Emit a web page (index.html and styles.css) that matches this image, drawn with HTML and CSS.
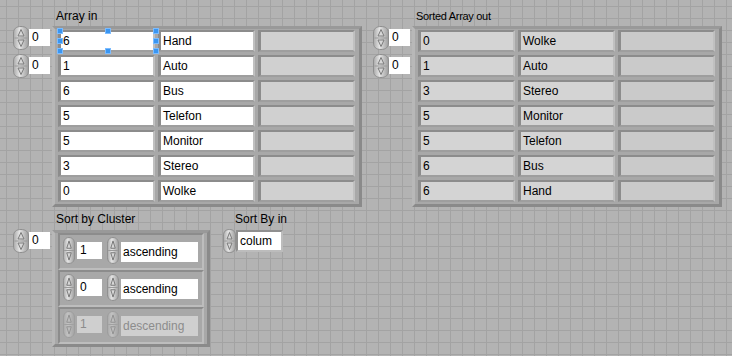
FILE: index.html
```html
<!DOCTYPE html>
<html lang="de">
<head>
    <meta charset="UTF-8">
    <meta name="viewport" content="width=device-width, initial-scale=1.0">
    <title>Sort Array</title>
    <link rel="stylesheet" href="styles.css">
</head>
<body>
    <svg class="defs">
        <defs>
            <linearGradient id="spinFill" x1="0" y1="0" x2="1" y2="0">
                <stop offset="0" stop-color="#a9a9a9"/>
                <stop offset="0.4" stop-color="#e4e4e4"/>
                <stop offset="1" stop-color="#9d9d9d"/>
            </linearGradient>
        </defs>
    </svg>

    <div class="panel">
        <div class="row top">
            <div class="array-ctl">
                <div class="label">Array in</div>
                <div class="array-body">
                    <div class="index-col">
                        <div class="index"><span class="spin"></span><div class="num">0</div></div>
                        <div class="index"><span class="spin"></span><div class="num">0</div></div>
                    </div>
                    <div class="frame array-frame"><div class="cells" id="arrayIn"></div></div>
                </div>
            </div>

            <div class="array-ctl out">
                <div class="label small">Sorted Array out</div>
                <div class="array-body">
                    <div class="index-col">
                        <div class="index"><span class="spin"></span><div class="num">0</div></div>
                        <div class="index"><span class="spin"></span><div class="num">0</div></div>
                    </div>
                    <div class="frame array-frame"><div class="cells" id="arrayOut"></div></div>
                </div>
            </div>
        </div>

        <div class="row bottom">
            <div class="array-ctl">
                <div class="label">Sort by Cluster</div>
                <div class="array-body">
                    <div class="index-col">
                        <div class="index"><span class="spin"></span><div class="num">0</div></div>
                    </div>
                    <div class="frame cluster-frame" id="sortCluster"></div>
                </div>
            </div>

            <div class="sortby">
                <div class="label">Sort By in</div>
                <div class="sortby-body">
                    <span class="spin"></span>
                    <div class="ring-frame"><div class="ring">colum</div></div>
                </div>
            </div>
        </div>
    </div>

    <script>
        const arrayIn = [[6, 'Hand'], [1, 'Auto'], [6, 'Bus'], [5, 'Telefon'], [5, 'Monitor'], [3, 'Stereo'], [0, 'Wolke']];
        const arrayOut = [[0, 'Wolke'], [1, 'Auto'], [3, 'Stereo'], [5, 'Monitor'], [5, 'Telefon'], [6, 'Bus'], [6, 'Hand']];
        const sortCluster = [[1, 'ascending', false], [0, 'ascending', false], [1, 'descending', true]];

        const spinSvg =
            '<svg viewBox="0 0 16 24" preserveAspectRatio="none">' +
            '<path d="M8 0.5C13 0.5 15.5 3 15.5 7V17C15.5 21 13 23.5 8 23.5C3 23.5 0.5 21 0.5 17V7C0.5 3 3 0.5 8 0.5Z" fill="url(#spinFill)" stroke="#8e8e8e" vector-effect="non-scaling-stroke"/>' +
            '<line x1="1.5" y1="12" x2="14.5" y2="12" stroke="#9a9a9a" vector-effect="non-scaling-stroke"/>' +
            '<path d="M8 3.5L11 10H5Z" fill="#d8d8d8" stroke="#7a7a7a" vector-effect="non-scaling-stroke"/>' +
            '<path d="M8 20.5L11 14H5Z" fill="#d8d8d8" stroke="#7a7a7a" vector-effect="non-scaling-stroke"/>' +
            '</svg>';

        function fillArray(id, rows) {
            const grid = document.getElementById(id);
            rows.forEach(([num, word]) => {
                [num, word, ''].forEach((value, col) => {
                    const cell = document.createElement('div');
                    cell.className = col === 2 ? 'cell empty' : 'cell';
                    cell.textContent = value;
                    grid.appendChild(cell);
                });
            });
        }

        fillArray('arrayIn', arrayIn);
        fillArray('arrayOut', arrayOut);

        // selection handles round the first element
        const selected = document.querySelector('#arrayIn .cell');
        selected.classList.add('selected');
        ['tl', 'tm', 'tr', 'ml', 'mr', 'bl', 'bm', 'br'].forEach(pos => {
            const handle = document.createElement('span');
            handle.className = 'handle h-' + pos;
            selected.appendChild(handle);
        });

        const clusterFrame = document.getElementById('sortCluster');
        sortCluster.forEach(([num, order, disabled]) => {
            const cluster = document.createElement('div');
            cluster.className = disabled ? 'cluster disabled' : 'cluster';
            cluster.innerHTML =
                '<span class="spin"></span><div class="num">' + num + '</div>' +
                '<span class="spin"></span><div class="ring">' + order + '</div>';
            clusterFrame.appendChild(cluster);
        });

        document.querySelectorAll('.spin').forEach(spin => {
            spin.innerHTML = spinSvg;
        });
    </script>
</body>
</html>
```

FILE: styles.css
```css
body {
    margin: 0;
    width: 732px;
    height: 356px;
    overflow: hidden;
    background-color: #b3b3b3;
    background-image:
        linear-gradient(to right, #a3a3a3 1px, transparent 1px),
        linear-gradient(to bottom, #a3a3a3 1px, transparent 1px);
    background-size: 12px 12px;
    background-position: 6px 6px;
    font-family: "Liberation Sans", Arial, sans-serif;
    font-size: 12px;
    color: #000;
}
.defs {
    position: absolute;
    width: 0;
    height: 0;
}
.panel {
    padding: 9px 0 0 13px;
}
.row {
    display: flex;
    align-items: flex-start;
}
.row.top {
    gap: 11px;
}
.row.bottom {
    margin-top: 5px;
    gap: 13px;
}
.label {
    height: 17px;
    line-height: 15px;
    padding-left: 43px;
    white-space: nowrap;
}
.label.small {
    font-size: 11px;
    letter-spacing: -0.3px;
}
.array-body {
    display: flex;
    align-items: flex-start;
    gap: 2px;
}
.index-col {
    display: flex;
    flex-direction: column;
    gap: 4px;
}
.index {
    display: flex;
    align-items: flex-start;
}
.spin {
    display: block;
    width: 16px;
    height: 24px;
    flex: none;
}
.spin svg {
    display: block;
    width: 100%;
    height: 100%;
}
.num {
    box-sizing: border-box;
    width: 21px;
    height: 17px;
    margin-top: 3px;
    padding-left: 3px;
    line-height: 17px;
    background: #fff;
}
.frame {
    border: 3px solid;
    border-color: #999 #8a8a8a #8a8a8a #b8b8b8;
    background: #a8a8a8;
}
.array-frame {
    padding: 1px 4px 2px 3px;
}
.cells {
    display: grid;
    grid-template-columns: repeat(3, 97px);
    gap: 3px;
}
.cell {
    box-sizing: border-box;
    height: 22px;
    padding-left: 2px;
    border-style: solid;
    border-width: 2px 2px 2px 3px;
    border-color: #8c8c8c #c0c0c0 #9e9e9e #8c8c8c;
    background: #fff;
    line-height: 18px;
    white-space: nowrap;
}
.cell.empty {
    background: #d0d0d0;
}
.out .cell {
    background: #d4d4d4;
}
.out .cell.empty {
    background: #cacaca;
}
.cell.selected {
    position: relative;
}
.handle {
    position: absolute;
    box-sizing: border-box;
    width: 6px;
    height: 6px;
    background: #3a96f2;
    border: 1px solid #7cbcff;
}
.h-tl, .h-ml, .h-bl { left: -4px; }
.h-tm, .h-bm { left: 44px; }
.h-tr, .h-mr, .h-br { left: 92px; }
.h-tl, .h-tm, .h-tr { top: -4px; }
.h-ml, .h-mr { top: 6px; }
.h-bl, .h-bm, .h-br { top: 16px; }

.cluster-frame {
    margin-top: 1px;
    padding: 0 3px;
}
.cluster {
    box-sizing: border-box;
    width: 146px;
    height: 37px;
    padding: 2px 0 0 3px;
    display: flex;
    align-items: flex-start;
    border: 2px solid;
    border-color: #8c8c8c #bdbdbd #bdbdbd #8c8c8c;
}
.cluster .spin {
    width: 12px;
    height: 27px;
}
.cluster .num {
    width: 25px;
    margin: 5px 5px 0 2px;
}
.ring {
    box-sizing: border-box;
    width: 77px;
    height: 20px;
    margin: 5px 0 0 2px;
    padding-left: 2px;
    line-height: 20px;
    background: #fff;
    white-space: nowrap;
}
.cluster.disabled .num,
.cluster.disabled .ring {
    background: #cfcfcf;
    color: #8c8c8c;
}
.cluster.disabled .spin {
    opacity: 0.45;
}
.sortby .label {
    padding-left: 12px;
}
.sortby-body {
    display: flex;
    align-items: flex-start;
}
.sortby-body .spin {
    width: 13px;
    height: 24px;
}
.ring-frame {
    margin-top: 1px;
    border: 2px solid;
    border-color: #8f8f8f #bcbcbc #bcbcbc #8f8f8f;
}
.ring-frame .ring {
    width: 43px;
    height: 18px;
    margin: 0;
    line-height: 18px;
}
```
